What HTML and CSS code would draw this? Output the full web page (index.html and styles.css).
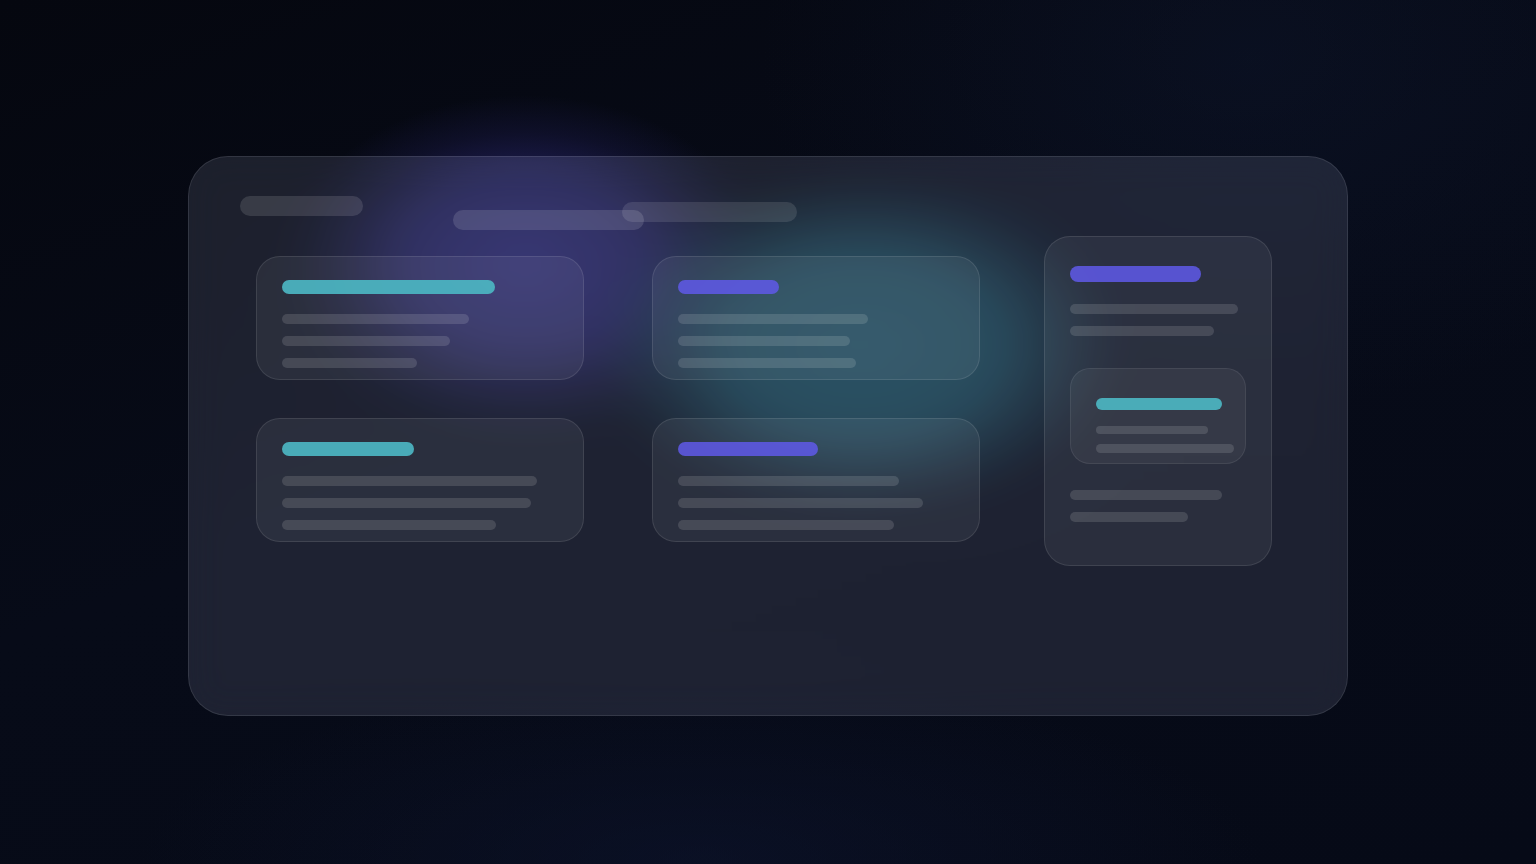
FILE: index.html
```html
<!DOCTYPE html>
<html lang="en">
<head>
<meta charset="utf-8">
<title>Dashboard skeleton</title>
<link rel="stylesheet" href="styles.css">
</head>
<body>
<div class="stage">
  <div class="glow glow-purple"></div>
  <div class="glow glow-teal"></div>
  <div class="panel">
    <div class="header">
      <span class="pill pill-a"></span>
      <span class="pill pill-b"></span>
      <span class="pill pill-c"></span>
    </div>
    <div class="content">
      <div class="col">
        <div class="card">
          <span class="title teal" style="width:213px"></span>
          <span class="line" style="width:187px"></span>
          <span class="line" style="width:168px"></span>
          <span class="line" style="width:135px"></span>
        </div>
        <div class="card">
          <span class="title teal" style="width:132px"></span>
          <span class="line" style="width:255px"></span>
          <span class="line" style="width:249px"></span>
          <span class="line" style="width:214px"></span>
        </div>
      </div>
      <div class="col">
        <div class="card">
          <span class="title purple" style="width:101px"></span>
          <span class="line" style="width:190px"></span>
          <span class="line" style="width:172px"></span>
          <span class="line" style="width:178px"></span>
        </div>
        <div class="card">
          <span class="title purple" style="width:140px"></span>
          <span class="line" style="width:221px"></span>
          <span class="line" style="width:245px"></span>
          <span class="line" style="width:216px"></span>
        </div>
      </div>
      <div class="side">
        <span class="side-title purple" style="width:131px"></span>
        <span class="line" style="width:168px"></span>
        <span class="line" style="width:144px"></span>
        <div class="nested">
          <span class="title teal" style="width:126px"></span>
          <span class="line" style="width:112px"></span>
          <span class="line" style="width:138px"></span>
        </div>
        <span class="line" style="width:152px"></span>
        <span class="line" style="width:118px"></span>
      </div>
    </div>
  </div>
</div>
</body>
</html>
```
FILE: styles.css
```css
* { box-sizing: border-box; }
html, body {
  margin: 0;
  padding: 0;
  width: 1536px;
  height: 864px;
  overflow: hidden;
  font-family: "Inter", "Liberation Sans", sans-serif;
}
body {
  background:
    radial-gradient(ellipse 700px 500px at 1250px 60px, rgba(16, 26, 52, 0.35), transparent 70%),
    radial-gradient(ellipse 800px 260px at 700px 860px, rgba(14, 22, 50, 0.5), transparent 70%),
    linear-gradient(160deg, #05070f 0%, #070b18 45%, #060a17 100%);
}
.stage {
  position: relative;
  width: 1536px;
  height: 864px;
  padding: 156px 0 0 188px;
}
.glow {
  position: absolute;
  border-radius: 50%;
  pointer-events: none;
}
.glow-purple {
  left: 285px;
  top: 95px;
  width: 480px;
  height: 340px;
  background: radial-gradient(closest-side, rgba(38, 36, 104, 0.95) 0%, rgba(34, 32, 92, 0.82) 50%, rgba(30, 28, 80, 0.35) 78%, rgba(30, 28, 80, 0) 100%);
}
.glow-teal {
  left: 600px;
  top: 175px;
  width: 520px;
  height: 340px;
  background: radial-gradient(closest-side, rgba(22, 68, 84, 0.95) 0%, rgba(22, 66, 82, 0.85) 52%, rgba(20, 60, 76, 0.35) 80%, rgba(20, 60, 76, 0) 100%);
}
.panel {
  position: relative;
  z-index: 1;
  width: 1160px;
  height: 560px;
  border-radius: 40px;
  background: rgba(212, 224, 255, 0.115);
  border: 1px solid rgba(255, 255, 255, 0.1);
  backdrop-filter: blur(18px);
  padding: 39px 0 0 51px;
}
.header {
  display: flex;
  align-items: flex-start;
  height: 34px;
}
.pill {
  display: block;
  height: 20px;
  border-radius: 10px;
  background: rgba(255, 255, 255, 0.12);
}
.pill-a { width: 123px; }
.pill-b { width: 191px; margin-left: 90px; margin-top: 14px; background: rgba(255, 255, 255, 0.13); }
.pill-c { width: 175px; margin-left: -22px; margin-top: 6px; background: rgba(255, 255, 255, 0.11); }
.content {
  display: flex;
  align-items: flex-start;
  margin-top: 6px;
  padding-left: 16px;
}
.col {
  display: flex;
  flex-direction: column;
  gap: 38px;
  margin-top: 20px;
  width: 328px;
  margin-right: 68px;
}
.col + .col { margin-right: 64px; }
.card {
  display: flex;
  flex-direction: column;
  align-items: flex-start;
  height: 124px;
  padding: 23px 0 0 25px;
  border-radius: 24px;
  background: rgba(255, 255, 255, 0.06);
  border: 1px solid rgba(255, 255, 255, 0.1);
}
.title {
  display: block;
  height: 14px;
  border-radius: 7px;
  margin-bottom: 20px;
}
.side-title {
  display: block;
  height: 16px;
  border-radius: 8px;
  margin-bottom: 22px;
}
.teal { background: rgba(76, 182, 194, 0.93); }
.purple { background: rgba(96, 90, 232, 0.86); }
.line {
  display: block;
  height: 10px;
  border-radius: 5px;
  background: rgba(255, 255, 255, 0.13);
  margin-bottom: 12px;
}
.card .line:last-child { margin-bottom: 0; }
.side {
  display: flex;
  flex-direction: column;
  align-items: flex-start;
  width: 228px;
  height: 330px;
  padding: 29px 0 0 25px;
  border-radius: 26px;
  background: rgba(255, 255, 255, 0.06);
  border: 1px solid rgba(255, 255, 255, 0.1);
}
.nested {
  display: flex;
  flex-direction: column;
  align-items: flex-start;
  width: 176px;
  height: 96px;
  margin-top: 20px;
  margin-bottom: 26px;
  padding: 29px 0 0 25px;
  border-radius: 20px;
  background: rgba(255, 255, 255, 0.05);
  border: 1px solid rgba(255, 255, 255, 0.08);
}
.nested .title { margin-bottom: 16px; }
.nested .line { margin-bottom: 10px; }
```
